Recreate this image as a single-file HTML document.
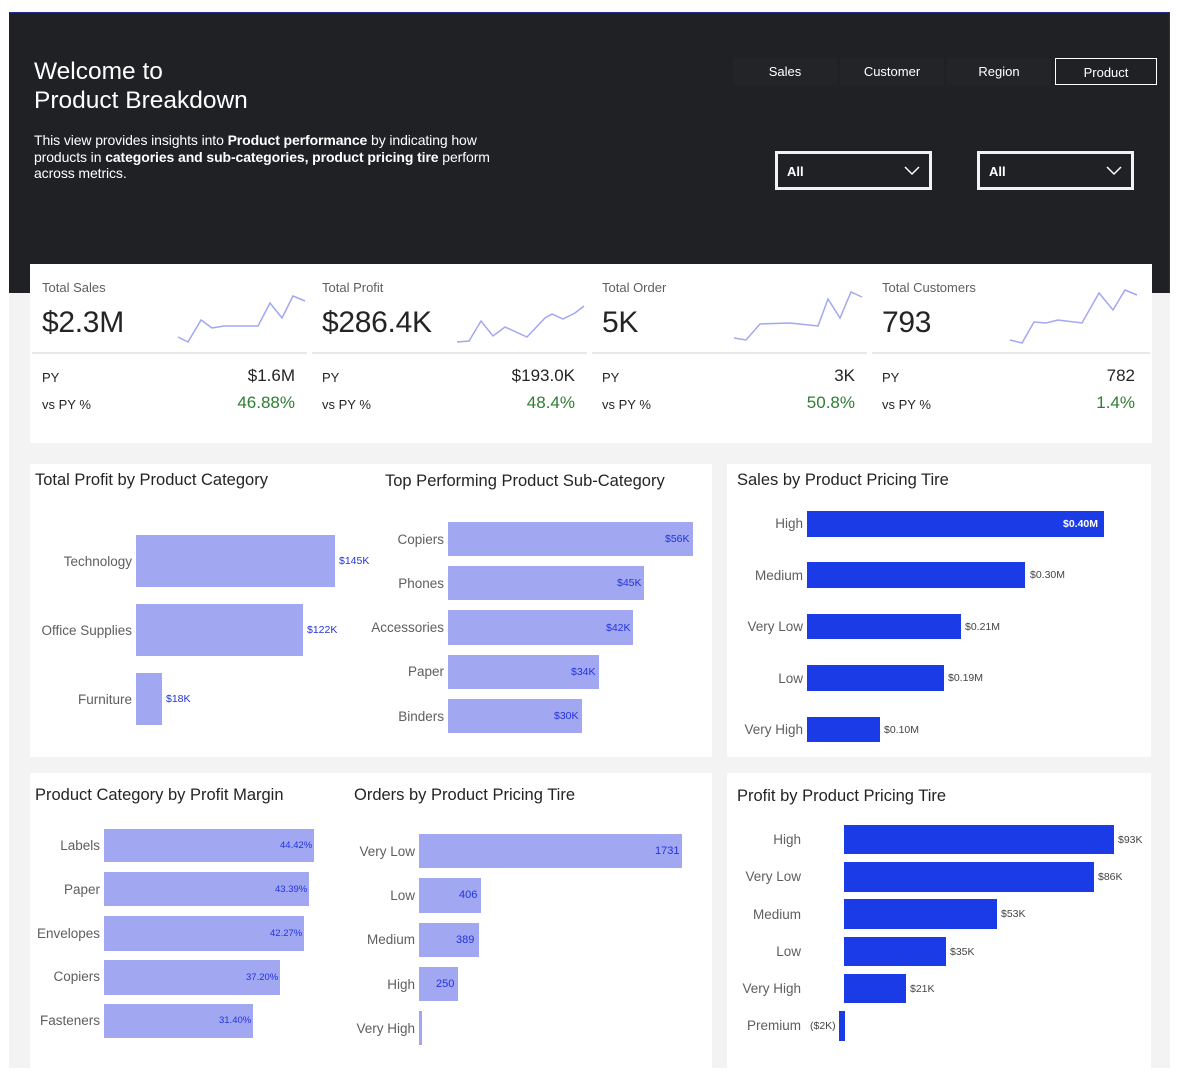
<!DOCTYPE html>
<html><head><meta charset="utf-8"><style>
*{margin:0;padding:0;box-sizing:border-box}
body{width:1177px;height:1080px;background:#fff;position:relative;overflow:hidden;font-family:"Liberation Sans",sans-serif;color:#252423}
.a{position:absolute}
.canvas{left:9px;top:12px;width:1161px;height:1056px;background:#f3f3f3}
.hdr{left:9px;top:12px;width:1161px;height:281px;background:#202125;border-top:1px solid #1f2e8a;border-right:1px solid #1f2e8a}
.card{background:#fff}
.nav{top:58px;height:27px;width:104px;background:#222428;color:#fff;font-size:13px;text-align:center;line-height:27px}
.dd{top:151px;height:39px;width:157px;border:3px solid #f2f2f2;background:#202125;color:#fff;font-size:13px;padding-left:9px;line-height:36px;font-weight:bold}
.dd svg{position:absolute;right:9px;top:12px}
.kt{font-size:13px;color:#605e5c}
.kv{font-size:30px;color:#252423;letter-spacing:-0.3px}
.kl{font-size:13px;color:#252423}
.kr{font-size:17px;text-align:right;width:120px}
.g{color:#2e7d32}
.ttl{font-size:16.5px;color:#252423}
.lb{font-size:13.5px;color:#605e5c;text-align:right;width:120px}
.b1{background:#a2a7f2}
.b2{background:#1b3be6}
.v{font-size:10.5px;color:#2233dd}
.vw{font-size:10.5px;color:#fff;font-weight:bold}
.vg{font-size:10.5px;color:#444}
</style></head><body>
<div class="a canvas"></div>
<div class="a hdr"></div>
<div class="a" style="left:34px;top:57px;color:#fff;font-size:24.5px;line-height:29px">Welcome to<br>Product Breakdown</div>
<div class="a" style="left:34px;top:132px;white-space:nowrap;color:#fff;font-size:14px;line-height:16.5px;letter-spacing:-0.1px">This view provides insights into <b>Product performance</b> by indicating how<br>products in <b>categories and sub-categories, product pricing tire</b> perform<br>across metrics.</div>
<div class="a nav" style="left:733px">Sales</div>
<div class="a nav" style="left:840px">Customer</div>
<div class="a nav" style="left:947px">Region</div>
<div class="a nav" style="left:1055px;background:#202125;border:1.5px solid #fff;width:102px">Product</div>
<div class="a dd" style="left:775px">All<svg width="16" height="10"><path d="M1 1 L8 8 L15 1" stroke="#fff" stroke-width="1.5" fill="none"/></svg></div>
<div class="a dd" style="left:977px">All<svg width="16" height="10"><path d="M1 1 L8 8 L15 1" stroke="#fff" stroke-width="1.5" fill="none"/></svg></div>

<div class="a card" style="left:30px;top:264px;width:1122px;height:179px"></div>
<svg class="a" style="left:0;top:0" width="1177" height="450">
<g stroke="#e1e1e1" stroke-width="1.5"><line x1="32" y1="353" x2="307" y2="353"/><line x1="312" y1="353" x2="587" y2="353"/><line x1="592" y1="353" x2="867" y2="353"/><line x1="872" y1="353" x2="1150" y2="353"/></g>
<g fill="none" stroke="#a2a7f2" stroke-width="1.5">
<polyline points="178,337 188,342 201,320 212,328 224,326 258,326 270,303 282,318 293,296 305,301"/>
<polyline points="457,342 469,341 481,321 493,336 505,327 527,337 545,318 552,314 563,319 575,313 584,306"/>
<polyline points="734,338 746,340 760,324 790,323 818,326 828,299 840,318 851,292 862,297"/>
<polyline points="1010,340 1022,343 1034,322 1046,323 1058,320 1082,323 1099,293 1113,310 1125,290 1137,295"/>
</g></svg>
<div class="a kt" style="left:42px;top:280px">Total Sales</div>
<div class="a kt" style="left:322px;top:280px">Total Profit</div>
<div class="a kt" style="left:602px;top:280px">Total Order</div>
<div class="a kt" style="left:882px;top:280px">Total Customers</div>
<div class="a kv" style="left:42px;top:306px">$2.3M</div>
<div class="a kv" style="left:322px;top:306px">$286.4K</div>
<div class="a kv" style="left:602px;top:306px">5K</div>
<div class="a kv" style="left:882px;top:306px">793</div>
<div class="a kl" style="left:42px;top:370px">PY</div><div class="a kl" style="left:42px;top:397px">vs PY %</div>
<div class="a kl" style="left:322px;top:370px">PY</div><div class="a kl" style="left:322px;top:397px">vs PY %</div>
<div class="a kl" style="left:602px;top:370px">PY</div><div class="a kl" style="left:602px;top:397px">vs PY %</div>
<div class="a kl" style="left:882px;top:370px">PY</div><div class="a kl" style="left:882px;top:397px">vs PY %</div>
<div class="a kr" style="left:175px;top:366px">$1.6M</div><div class="a kr g" style="left:175px;top:393px">46.88%</div>
<div class="a kr" style="left:455px;top:366px">$193.0K</div><div class="a kr g" style="left:455px;top:393px">48.4%</div>
<div class="a kr" style="left:735px;top:366px">3K</div><div class="a kr g" style="left:735px;top:393px">50.8%</div>
<div class="a kr" style="left:1015px;top:366px">782</div><div class="a kr g" style="left:1015px;top:393px">1.4%</div>

<div class="a card" style="left:30px;top:464px;width:682px;height:293px"></div>
<div class="a card" style="left:727px;top:464px;width:424px;height:293px"></div>
<div class="a card" style="left:30px;top:773px;width:682px;height:295px"></div>
<div class="a card" style="left:727px;top:773px;width:424px;height:295px"></div>

<div class="a ttl" style="left:35px;top:471px">Total Profit by Product Category</div>
<div class="a lb" style="left:12px;top:554px">Technology</div><div class="a b1" style="left:136px;top:535px;width:199px;height:52px"></div><div class="a v" style="left:339px;top:555px">$145K</div>
<div class="a lb" style="left:12px;top:623px">Office Supplies</div><div class="a b1" style="left:136px;top:604px;width:167px;height:52px"></div><div class="a v" style="left:307px;top:624px">$122K</div>
<div class="a lb" style="left:12px;top:692px">Furniture</div><div class="a b1" style="left:136px;top:673px;width:26px;height:52px"></div><div class="a v" style="left:166px;top:693px">$18K</div>

<div class="a ttl" style="left:385px;top:472px">Top Performing Product Sub-Category</div>
<div class="a lb" style="left:324px;top:532px">Copiers</div><div class="a b1" style="left:448px;top:522px;width:245px;height:34px"></div><div class="a v" style="left:665px;top:533px">$56K</div>
<div class="a lb" style="left:324px;top:576px">Phones</div><div class="a b1" style="left:448px;top:566px;width:196px;height:34px"></div><div class="a v" style="left:617px;top:577px">$45K</div>
<div class="a lb" style="left:324px;top:620px">Accessories</div><div class="a b1" style="left:448px;top:610px;width:185px;height:35px"></div><div class="a v" style="left:606px;top:622px">$42K</div>
<div class="a lb" style="left:324px;top:664px">Paper</div><div class="a b1" style="left:448px;top:655px;width:151px;height:34px"></div><div class="a v" style="left:571px;top:666px">$34K</div>
<div class="a lb" style="left:324px;top:709px">Binders</div><div class="a b1" style="left:448px;top:699px;width:134px;height:34px"></div><div class="a v" style="left:554px;top:710px">$30K</div>

<div class="a ttl" style="left:737px;top:471px">Sales by Product Pricing Tire</div>
<div class="a lb" style="left:683px;top:516px">High</div><div class="a b2" style="left:807px;top:511px;width:297px;height:26px"></div><div class="a vw" style="left:1063px;top:518px">$0.40M</div>
<div class="a lb" style="left:683px;top:568px">Medium</div><div class="a b2" style="left:807px;top:562px;width:218px;height:26px"></div><div class="a vg" style="left:1030px;top:569px">$0.30M</div>
<div class="a lb" style="left:683px;top:619px">Very Low</div><div class="a b2" style="left:807px;top:614px;width:154px;height:25px"></div><div class="a vg" style="left:965px;top:621px">$0.21M</div>
<div class="a lb" style="left:683px;top:671px">Low</div><div class="a b2" style="left:807px;top:665px;width:137px;height:26px"></div><div class="a vg" style="left:948px;top:672px">$0.19M</div>
<div class="a lb" style="left:683px;top:722px">Very High</div><div class="a b2" style="left:807px;top:717px;width:73px;height:25px"></div><div class="a vg" style="left:884px;top:724px">$0.10M</div>

<div class="a ttl" style="left:35px;top:786px">Product Category by Profit Margin</div>
<div class="a lb" style="left:-20px;top:838px">Labels</div><div class="a b1" style="left:104px;top:829px;width:210px;height:33px"></div><div class="a v" style="left:280px;top:840px;font-size:9.5px">44.42%</div>
<div class="a lb" style="left:-20px;top:882px">Paper</div><div class="a b1" style="left:104px;top:872px;width:205px;height:34px"></div><div class="a v" style="left:275px;top:884px;font-size:9.5px">43.39%</div>
<div class="a lb" style="left:-20px;top:926px">Envelopes</div><div class="a b1" style="left:104px;top:916px;width:200px;height:35px"></div><div class="a v" style="left:270px;top:928px;font-size:9.5px">42.27%</div>
<div class="a lb" style="left:-20px;top:969px">Copiers</div><div class="a b1" style="left:104px;top:960px;width:176px;height:35px"></div><div class="a v" style="left:246px;top:972px;font-size:9.5px">37.20%</div>
<div class="a lb" style="left:-20px;top:1013px">Fasteners</div><div class="a b1" style="left:104px;top:1004px;width:149px;height:34px"></div><div class="a v" style="left:219px;top:1015px;font-size:9.5px">31.40%</div>

<div class="a ttl" style="left:354px;top:786px">Orders by Product Pricing Tire</div>
<div class="a lb" style="left:295px;top:844px">Very Low</div><div class="a b1" style="left:419px;top:834px;width:263px;height:34px"></div><div class="a v" style="left:655px;top:845px;font-size:11px">1731</div>
<div class="a lb" style="left:295px;top:888px">Low</div><div class="a b1" style="left:419px;top:878px;width:62px;height:35px"></div><div class="a v" style="left:459px;top:889px;font-size:11px">406</div>
<div class="a lb" style="left:295px;top:932px">Medium</div><div class="a b1" style="left:419px;top:923px;width:60px;height:34px"></div><div class="a v" style="left:456px;top:934px;font-size:11px">389</div>
<div class="a lb" style="left:295px;top:977px">High</div><div class="a b1" style="left:419px;top:967px;width:39px;height:34px"></div><div class="a v" style="left:436px;top:978px;font-size:11px">250</div>
<div class="a lb" style="left:295px;top:1021px">Very High</div><div class="a b1" style="left:419px;top:1011px;width:3px;height:34px"></div>

<div class="a ttl" style="left:737px;top:787px">Profit by Product Pricing Tire</div>
<div class="a lb" style="left:681px;top:832px">High</div><div class="a b2" style="left:844px;top:825px;width:270px;height:29px"></div><div class="a vg" style="left:1118px;top:834px">$93K</div>
<div class="a lb" style="left:681px;top:869px">Very Low</div><div class="a b2" style="left:844px;top:862px;width:250px;height:30px"></div><div class="a vg" style="left:1098px;top:871px">$86K</div>
<div class="a lb" style="left:681px;top:907px">Medium</div><div class="a b2" style="left:844px;top:899px;width:153px;height:30px"></div><div class="a vg" style="left:1001px;top:908px">$53K</div>
<div class="a lb" style="left:681px;top:944px">Low</div><div class="a b2" style="left:844px;top:937px;width:102px;height:29px"></div><div class="a vg" style="left:950px;top:946px">$35K</div>
<div class="a lb" style="left:681px;top:981px">Very High</div><div class="a b2" style="left:844px;top:974px;width:62px;height:29px"></div><div class="a vg" style="left:910px;top:983px">$21K</div>
<div class="a lb" style="left:681px;top:1018px">Premium</div><div class="a b2" style="left:839px;top:1011px;width:6px;height:30px"></div><div class="a vg" style="left:810px;top:1020px">($2K)</div>
</body></html>
